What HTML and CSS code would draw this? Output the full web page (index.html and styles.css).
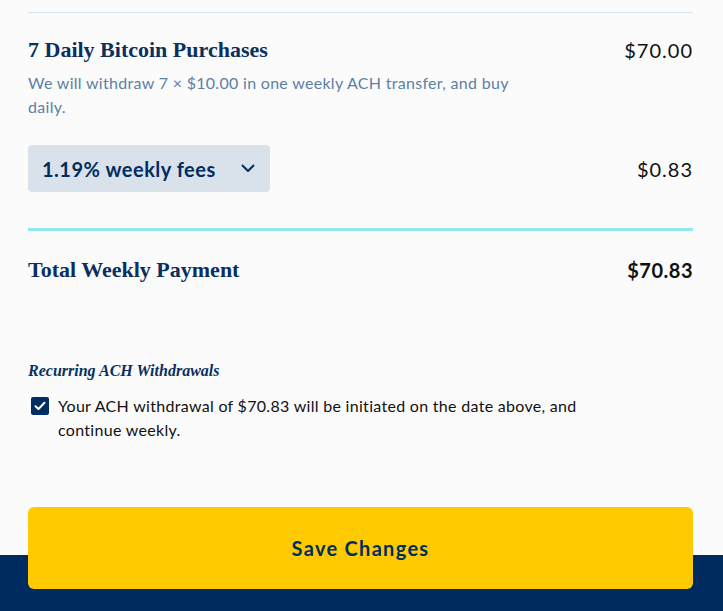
FILE: index.html
```html
<!DOCTYPE html>
<html lang="en">
<head>
  <meta charset="UTF-8">
  <title>Recurring Purchase Summary</title>
  <link rel="stylesheet" href="styles.css">
</head>
<body>
  <div class="summary">
    <div class="line-item">
      <div class="line-info">
        <h3 class="serif-title">7 Daily Bitcoin Purchases</h3>
        <p class="line-desc">We will withdraw 7 × $10.00 in one weekly ACH transfer, and buy daily.</p>
      </div>
      <span class="amount">$70.00</span>
    </div>

    <div class="fee-row">
      <button class="fee-select">
        <span>1.19% weekly fees</span>
        <svg width="14" height="9" viewBox="0 0 14 9" fill="none">
          <path d="M1.5 1.5 L7 7 L12.5 1.5" stroke="#002d62" stroke-width="2" stroke-linecap="round" stroke-linejoin="round"/>
        </svg>
      </button>
      <span class="amount">$0.83</span>
    </div>

    <div class="total-row">
      <h3 class="serif-title">Total Weekly Payment</h3>
      <span class="amount total">$70.83</span>
    </div>

    <div class="recurring">
      <h4 class="recurring-title">Recurring ACH Withdrawals</h4>
      <label class="check-row">
        <span class="checkbox">
          <svg width="12" height="10" viewBox="0 0 12 10" fill="none">
            <path d="M1.5 5.2 L4.5 8 L10.5 1.8" stroke="#fff" stroke-width="2" stroke-linecap="round" stroke-linejoin="round"/>
          </svg>
        </span>
        <span class="check-text">Your ACH withdrawal of $70.83 will be initiated on the date above, and continue weekly.</span>
      </label>
    </div>
  </div>

  <div class="actions">
    <button class="save-btn">Save Changes</button>
  </div>
</body>
</html>
```

FILE: styles.css
```css
body {
  margin: 0;
  background-color: #fbfbfb;
  font-family: 'Lato', 'Noto Sans', sans-serif;
  color: #111;
}

.summary {
  margin: 12px 30px 0 28px;
  border-top: 1px solid #d6e3ef;
}

.serif-title {
  font-family: 'Liberation Serif', 'DejaVu Serif', serif;
  font-weight: bold;
  font-size: 22px;
  line-height: 28px;
  color: #0a2f60;
  margin: 0;
}

.line-item {
  display: flex;
  justify-content: space-between;
  align-items: flex-start;
  padding-top: 23px;
}

.line-desc {
  margin: 7px 0 0;
  max-width: 490px;
  font-size: 16px;
  letter-spacing: 0.3px;
  line-height: 24px;
  color: #5b80a8;
}

.amount {
  font-size: 20px;
  letter-spacing: 1px;
  line-height: 28px;
  color: #111;
}

.amount.total {
  font-weight: bold;
  letter-spacing: 0.5px;
}

.fee-row {
  display: flex;
  justify-content: space-between;
  align-items: center;
  margin-top: 26px;
  padding-bottom: 36px;
  border-bottom: 3px solid #8eeaee;
}

.fee-select {
  display: flex;
  align-items: center;
  justify-content: space-between;
  width: 242px;
  height: 47px;
  padding: 0 15px 0 14px;
  border: none;
  border-radius: 4px;
  background-color: #d9e2ea;
  font-family: inherit;
  font-size: 20px;
  font-weight: bold;
  letter-spacing: 0.5px;
  color: #002d62;
  cursor: pointer;
}

.total-row {
  display: flex;
  justify-content: space-between;
  align-items: center;
  padding-top: 25px;
}

.recurring {
  margin-top: 76px;
}

.recurring-title {
  font-family: 'Liberation Serif', 'DejaVu Serif', serif;
  font-style: italic;
  font-weight: bold;
  font-size: 16px;
  line-height: 22px;
  color: #0a2f60;
  margin: 0;
}

.check-row {
  display: flex;
  align-items: flex-start;
  gap: 9px;
  margin-top: 12px;
  padding-left: 3px;
}

.checkbox {
  flex: none;
  display: flex;
  align-items: center;
  justify-content: center;
  width: 18px;
  height: 18px;
  margin-top: 3px;
  border-radius: 2px;
  background-color: #002d62;
}

.check-text {
  max-width: 540px;
  font-size: 16px;
  letter-spacing: 0.3px;
  line-height: 24px;
  color: #111;
}

.actions {
  margin-top: 65px;
  padding: 0 30px 22px 28px;
  background: linear-gradient(to bottom, #fbfbfb 48px, #002b5e 48px);
}

.save-btn {
  display: block;
  width: 100%;
  height: 82px;
  border: none;
  border-radius: 6px;
  background-color: #ffca00;
  font-family: inherit;
  font-size: 20px;
  font-weight: bold;
  letter-spacing: 1.3px;
  color: #002d62;
  cursor: pointer;
}
```
